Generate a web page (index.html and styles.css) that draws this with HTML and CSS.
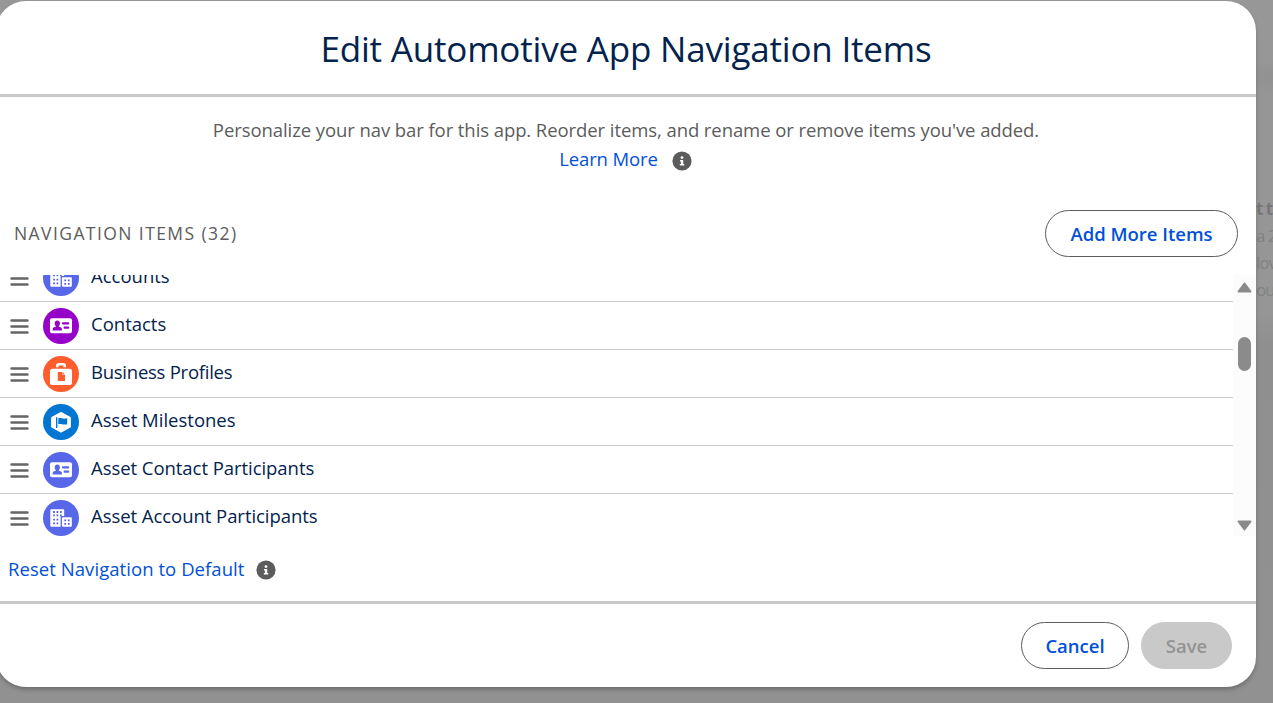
FILE: index.html
```
<!DOCTYPE html>
<html lang="en">
<head>
<meta charset="utf-8">
<title>Edit Automotive App Navigation Items</title>
<link rel="stylesheet" href="styles.css">
</head>
<body>
<svg width="0" height="0" class="sprite" aria-hidden="true">
  <symbol id="drag" viewBox="0 0 19 16"><path d="M1.500 2.500h16M1.500 8.500h16M1.500 14.500h16" stroke="#666" stroke-width="2.400" stroke-linecap="round"/></symbol>
  <symbol id="info" viewBox="0 0 20 20"><circle cx="10" cy="10" r="9.600" fill="#5c5c5c"/><circle cx="10" cy="6.600" r="1.400" fill="#fff"/><path d="M8 9.100h3.200v4h1.100v1.300H7.800v-1.300h1.100v-2.700H8z" fill="#fff"/></symbol>
  <symbol id="account" viewBox="0 0 36 36"><path fill="#fff" d="M7.300 10.200q0-1 1-1h11.900q1 0 1 1v5.900h-2.400q-1.200 0-1.200 1.200v9.500H8.300q-1 0-1-1z"/><rect x="18.900" y="17.300" width="9.900" height="9.500" rx="1" fill="#fff"/><path stroke="currentColor" stroke-width="1.800" d="M10.100 12h1.800M13.500 12h1.800M16.900 12h1.800M10.100 15.400h1.800M13.500 15.400h1.800M16.900 15.400h1.800M10.100 19.600h1.800M13.500 19.600h1.800M10.100 23.400h1.800M13.500 23.400h1.800M21.300 20.400h1.800M24.900 20.400h1.800M21.300 23.900h1.800M24.900 23.900h1.800"/></symbol>
  <symbol id="contact" viewBox="0 0 36 36"><rect x="7" y="10.300" width="22" height="15" rx="2" fill="#fff"/><g fill="currentColor"><ellipse cx="14.300" cy="15.500" rx="2.600" ry="2.900"/><path d="M13 17h2.600v1.600l2.400 1q.9.400.9 1.400v1.400H9.700V21q0-1 .9-1.400l2.400-1z"/><rect x="19" y="14.200" width="7.200" height="2.200" rx=".8"/><rect x="20.600" y="18.600" width="5.600" height="2.200" rx=".8"/></g></symbol>
  <symbol id="business" viewBox="0 0 36 36"><rect x="7" y="12.800" width="22" height="16.200" rx="2.600" fill="#fff"/><path d="M14.300 11.300V9.800q0-1.600 1.600-1.600h4.200q1.600 0 1.600 1.600v1.500" fill="none" stroke="#fff" stroke-width="2.500"/><path fill="currentColor" d="M14.800 16.500q0-.5.500-.5h3.900v2.200q0 .7.700.7H22v5.600q0 .5-.5.500h-6.200q-.5 0-.5-.5zM19.700 16l2.300 2.400h-2.300z"/></symbol>
  <symbol id="milestone" viewBox="0 0 36 36"><path d="M18 8.700l9.100 5v9.100L18 27.900l-9.100-5.100v-9.100z" fill="#fff" stroke="#fff" stroke-width="1.600" stroke-linejoin="round"/><path d="M13 13.200h1.400V24H13zM15.300 14.300c2.400-1.200 4.200 1.200 8.900 0v5.900c-4.200 1.200-6.300-1.100-8.900 0z" fill="currentColor"/></symbol>
</svg>
<div class="page-behind">
  <div class="behind-copy"><b>t t</b><span>a 2</span><span>lov</span><span>ou.</span></div>
</div>
<section class="modal" role="dialog">
  <header class="modal-header"><h1>Edit Automotive App Navigation Items</h1></header>
  <main class="modal-body">
    <div class="intro">
      <p class="intro-text">Personalize your nav bar for this app. Reorder items, and rename or remove items you've added.</p>
      <p class="learn"><a class="link learn-link">Learn More</a><svg class="info"><use href="#info"/></svg></p>
    </div>
    <div class="toolbar">
      <h2>NAVIGATION ITEMS (32)</h2>
      <button class="button add"><span>Add More Items</span></button>
    </div>
    <div class="list-frame">
      <ul class="list">
        <li class="row"><svg class="drag"><use href="#drag"/></svg><svg class="icon indigo"><use href="#account"/></svg><span>Accounts</span></li>
        <li class="row"><svg class="drag"><use href="#drag"/></svg><svg class="icon purple"><use href="#contact"/></svg><span>Contacts</span></li>
        <li class="row"><svg class="drag"><use href="#drag"/></svg><svg class="icon orange"><use href="#business"/></svg><span class="tight">Business Profiles</span></li>
        <li class="row"><svg class="drag"><use href="#drag"/></svg><svg class="icon blue"><use href="#milestone"/></svg><span>Asset Milestones</span></li>
        <li class="row"><svg class="drag"><use href="#drag"/></svg><svg class="icon indigo"><use href="#contact"/></svg><span class="snug">Asset Contact Participants</span></li>
        <li class="row"><svg class="drag"><use href="#drag"/></svg><svg class="icon indigo"><use href="#account"/></svg><span class="snug">Asset Account Participants</span></li>
      </ul>
      <div class="scrollbar">
        <svg class="arrow" viewBox="0 0 15 11"><path d="M7.500 1.500L13.500 9.500H1.500z"/></svg>
        <div class="thumb"></div>
        <svg class="arrow down" viewBox="0 0 15 11"><path d="M7.500 9.500L13.500 1.500H1.500z"/></svg>
      </div>
    </div>
    <div class="reset"><a class="link reset-link">Reset Navigation to Default</a><svg class="info"><use href="#info"/></svg></div>
  </main>
  <footer class="modal-footer">
    <button class="button cancel"><span>Cancel</span></button>
    <button class="button save" disabled><span>Save</span></button>
  </footer>
</section>
</body>
</html>
```
FILE: styles.css
```
* { box-sizing: border-box; }
body {
  margin: 0;
  width: 1273px;
  height: 703px;
  overflow: hidden;
  background: #949494;
  font-family: "Open Sans", "Noto Sans", sans-serif;
  font-size: 18.5px;
  color: #03234d;
}
h1, h2, p, ul { margin: 0; padding: 0; font-weight: 400; }
.sprite { position: absolute; }
svg { display: block; flex: none; }

.page-behind {
  position: absolute;
  inset: 0;
  display: flex;
  justify-content: flex-end;
  background: linear-gradient(#979797 0, #979797 60px, #929292 75px, #969696 100px, #969696 310px, #8f8f8f 345px, #919191 100%);
}
.behind-copy {
  display: flex;
  flex-direction: column;
  width: 17px;
  padding-top: 195px;
  line-height: 27px;
  font-size: 17px;
  letter-spacing: -1px;
  white-space: nowrap;
  overflow: hidden;
  color: #828282;
}
.behind-copy b { color: #777; }

.modal {
  position: relative;
  display: flex;
  flex-direction: column;
  width: 1260px;
  height: 686px;
  margin: 1px 0 0 -4px;
  border-radius: 30px;
  background: #fff;
  box-shadow: 0 3px 5px -1px rgba(0, 0, 0, .3);
}
.modal-header {
  height: 96px;
  border-bottom: 3px solid #c9c9c9;
  text-align: center;
}
.modal-header h1 {
  font-size: 35px;
  line-height: 95px;
  letter-spacing: -0.19px;
  white-space: nowrap;
}
.modal-body { flex: 1; display: flex; flex-direction: column; }
.intro {
  height: 113px;
  padding-top: 18px;
  text-align: center;
  line-height: 29px;
  color: #5c5c5c;
  white-space: nowrap;
}
.intro-text { letter-spacing: -0.08px; }
.learn { display: flex; justify-content: center; align-items: center; gap: 14px; padding-right: 1px; }
.link { color: #0250d9; }
.learn-link { letter-spacing: -0.12px; }
.info { width: 20px; height: 20px; }
.learn .info { margin-top: 5px; }

.toolbar {
  display: flex;
  align-items: center;
  justify-content: space-between;
  height: 47px;
  padding: 0 18px;
}
.toolbar h2 { margin-top: -2px; font-size: 17.5px; letter-spacing: 1.42px; color: #5c5c5c; }
.button {
  display: flex;
  align-items: center;
  justify-content: center;
  height: 47px;
  padding: 0;
  border: 1px solid #5c5c5c;
  border-radius: 24px;
  background: #fff;
  color: #0250d9;
  font: 600 18.5px "Open Sans", "Noto Sans", sans-serif;
  white-space: nowrap;
}
.add { width: 193px; }
.cancel { width: 108px; }
.save { width: 91px; border-color: #c9c9c9; background: #c9c9c9; color: #939393; }

.list-frame {
  display: flex;
  height: 261px;
  margin-top: 18px;
  overflow: hidden;
}
.list { flex: 1; margin-top: -21px; list-style: none; }
.row {
  display: flex;
  align-items: center;
  height: 48px;
  padding: 0 0 0 14px;
  border-bottom: 1px solid #c9c9c9;
  white-space: nowrap;
}
.row:last-child { border-bottom-color: transparent; }
.row span { line-height: 28px; margin-top: -3px; }
.row .tight { letter-spacing: -0.25px; }
.row .snug { letter-spacing: -0.05px; }
.drag { width: 19px; height: 16px; margin: 1px 14px 0 0; }
.icon { width: 36px; height: 36px; margin: 1px 12px 0 0; border-radius: 50%; }
.indigo { color: #5867e8; background: #5867e8; }
.purple { color: #9602c7; background: #9602c7; }
.orange { color: #ff5d2d; background: #ff5d2d; }
.blue { color: #0176d3; background: #0176d3; }

.scrollbar {
  display: flex;
  flex-direction: column;
  align-items: center;
  width: 23px;
  padding: 7px 0 5px;
  background: #fcfcfc;
}
.arrow { width: 15px; height: 11px; fill: #8b8b8b; stroke: #8b8b8b; stroke-width: 2; stroke-linejoin: round; }
.thumb { width: 13px; height: 34px; margin-top: 44px; border-radius: 7px; background: #8b8b8b; }
.down { margin-top: auto; }

.reset {
  display: flex;
  align-items: center;
  gap: 12px;
  height: 65px;
  padding: 0 0 1px 12px;
}
.reset-link { letter-spacing: 0.06px; }
.reset .info { margin-top: 3px; }
.modal-footer {
  display: flex;
  align-items: center;
  justify-content: flex-end;
  gap: 12px;
  height: 86px;
  padding: 0 24px 0 0;
  border-top: 3px solid #c9c9c9;
}
```
